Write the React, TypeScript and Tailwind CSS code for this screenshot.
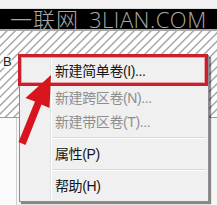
const cjk = { fontFamily: '"Liberation Sans", "Noto Sans CJK SC", sans-serif' };

// one menu row
const MenuItem = ({ label, disabled = false, h = 'h-[24px]' }: { label: string; disabled?: boolean; h?: string }) => (
  <div className={`flex items-center pl-[35px] text-[14px] tracking-[-0.4px] ${h} ${disabled ? 'text-[#8e8e8e]' : 'text-[#151515]'}`}>
    {label}
  </div>
);

const Separator = () => (
  <div className="flex h-[8px] flex-col justify-center pl-[33px] pr-[2px]">
    <div className="h-px bg-[#d9d9d9]" />
    <div className="h-px bg-white" />
  </div>
);

export default function App() {
  return (
    <div className="relative flex h-[205px] w-[217px] flex-col overflow-hidden bg-[#f6f6f6]" style={cjk}>
      {/* window strip + watermark bar */}
      <div className="h-[9px] shrink-0 border-b border-[#dcdcdc] bg-[#f2f2f2]" />
      <div
        className="flex h-[20px] shrink-0 items-center gap-[10px] bg-black pl-[10px] text-[22px] font-light leading-none text-[#a9a9a9]"
        style={{ fontFamily: '"Open Sans", "Noto Sans CJK SC", sans-serif' }}
      >
        <span className="tracking-[1px]">一联网</span>
        <span className="tracking-[0.5px]">3LIAN.COM</span>
      </div>
      <div className="h-[2px] shrink-0 bg-[#a8a8a8]" />

      {/* hatched unallocated area */}
      <div className="flex h-[86px] shrink-0 items-start bg-[repeating-linear-gradient(135deg,#ffffff_0px,#ffffff_3.5px,#a9a9a9_4.5px,#a9a9a9_5px,#ffffff_6px)] pl-[3px] pt-[24px]">
        <span className="bg-white/60 text-[13px] leading-none text-[#222]">B</span>
      </div>
      <div className="h-px shrink-0 bg-[#9a9a9a]" />
      <div className="flex flex-1">
        <div className="w-[17px] border-r border-[#d0d0d0] bg-[#fafafa]" />
      </div>

      {/* context menu */}
      <div className="absolute left-[19px] top-[55px] h-[147px] w-[190px] border border-[#8d8d8d] bg-[#f0f0f0] pt-[1px] shadow-[2px_2px_1px_rgba(0,0,0,0.45)]">
        <div className="absolute bottom-[2px] left-[30px] top-[2px] w-px bg-[#e2e3e3]" />
        <div className="absolute bottom-[2px] left-[31px] top-[2px] w-px bg-white" />
        <div className="relative flex flex-col">
          <MenuItem label="新建简单卷(I)..." h="h-[29px]" />
          <MenuItem label="新建跨区卷(N)..." disabled />
          <MenuItem label="新建带区卷(T)..." disabled />
          <Separator />
          <MenuItem label="属性(P)" />
          <Separator />
          <MenuItem label="帮助(H)" />
        </div>
      </div>

      {/* red highlight box */}
      <div className="absolute left-[18px] top-[54px] h-[32px] w-[190px] border-[3px] border-[#c9202b] shadow-[inset_0_0_0_1px_#e9a3a8]" />

      {/* red arrow */}
      <svg className="absolute left-0 top-0" width="217" height="205" viewBox="0 0 217 205">
        <polygon
          points="51,75 49.5,108 41.5,104.5 25.5,145 18.5,142 35,101.5 25.5,98"
          fill="#d8141d"
        />
      </svg>
    </div>
  );
}
